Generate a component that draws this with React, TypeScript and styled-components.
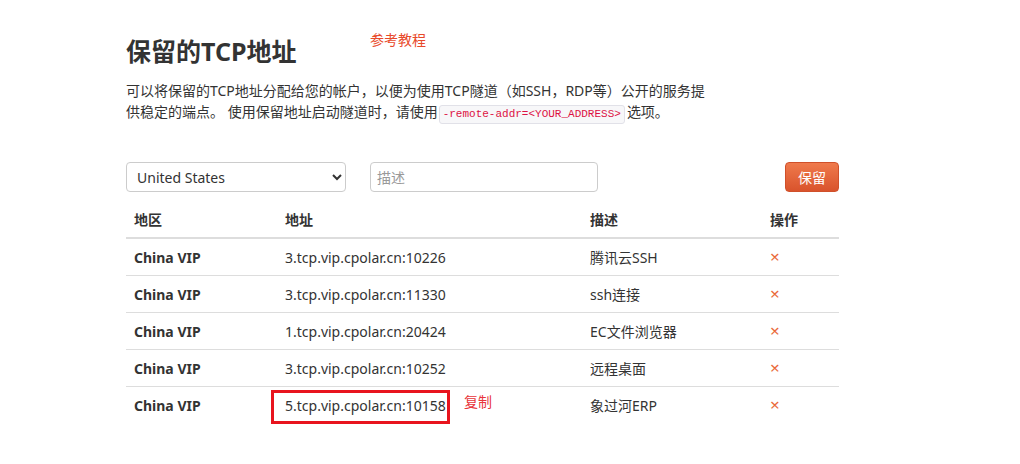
import styled, { createGlobalStyle } from "styled-components";

type Tunnel = {
    region: string
    address: string
    note: string
    marked?: boolean
}

const tunnels: Tunnel[] = [
    { region: "China VIP", address: "3.tcp.vip.cpolar.cn:10226", note: "腾讯云SSH" },
    { region: "China VIP", address: "3.tcp.vip.cpolar.cn:11330", note: "ssh连接" },
    { region: "China VIP", address: "1.tcp.vip.cpolar.cn:20424", note: "EC文件浏览器" },
    { region: "China VIP", address: "3.tcp.vip.cpolar.cn:10252", note: "远程桌面" },
    { region: "China VIP", address: "5.tcp.vip.cpolar.cn:10158", note: "象过河ERP", marked: true }
]

const GlobalStyle = createGlobalStyle`
    body {
        margin: 0;
        background: #fff;
        color: #333;
        font-family: "Noto Sans", "Noto Sans CJK SC", sans-serif;
        font-size: 14px;
    }
`

const Page = styled.div`
    padding: 26px 0 0 126px;
    width: 713px;
`

const TitleRow = styled.div`
    display: flex;
    align-items: flex-start;
`

const Title = styled.h2`
    margin: 9px 0 0;
    font-size: 25px;
    font-weight: 700;
    line-height: 32px;
    color: #333;
    width: 244px;
`

const HelpLink = styled.a`
    color: #e8492a;
    font-size: 14px;
    line-height: 20px;
    text-decoration: none;
    margin-top: 4px;
`

const Intro = styled.p`
    margin: 13px 0 0;
    width: 584px;
    line-height: 21px;
    font-size: 14px;
`

const Code = styled.code`
    display: inline-block;
    font-family: "Liberation Mono", monospace;
    font-size: 11px;
    line-height: 15px;
    color: #dd1144;
    background: #f7f7f9;
    border: 1px solid #e1e1e8;
    border-radius: 3px;
    padding: 1px 3px;
    margin: 0 2px 0 1px;
`

const Toolbar = styled.div`
    display: flex;
    align-items: center;
    margin-top: 38px;
`

const Select = styled.select`
    width: 220px;
    height: 30px;
    border: 1px solid #ccc;
    border-radius: 4px;
    background: #fff;
    color: #333;
    font: inherit;
    font-size: 14px;
    padding: 0 6px;
`

const Input = styled.input`
    margin-left: 24px;
    width: 228px;
    height: 30px;
    box-sizing: border-box;
    border: 1px solid #ccc;
    border-radius: 4px;
    font: inherit;
    font-size: 14px;
    padding: 0 6px;
    &::placeholder { color: #999; }
`

const SaveButton = styled.button`
    margin-left: auto;
    width: 54px;
    height: 30px;
    border: 1px solid #d0502a;
    border-radius: 4px;
    background: linear-gradient(#ef7a4c, #d9532c);
    color: #fff;
    font: inherit;
    font-size: 14px;
`

const Table = styled.table`
    width: 100%;
    border-collapse: collapse;
    margin-top: 9px;
`

const Th = styled.th<{ $w: number }>`
    width: ${p => p.$w}px;
    text-align: left;
    font-weight: 700;
    padding: 8px;
    height: 36px;
    box-sizing: border-box;
    border-bottom: 2px solid #ddd;
`

const Td = styled.td<{ $bold?: boolean }>`
    padding: 8px;
    height: 37px;
    box-sizing: border-box;
    border-top: 1px solid #ddd;
    font-weight: ${p => (p.$bold ? 700 : 400)};
    position: relative;
`

const Remove = styled.span`
    color: #ea6a3a;
    font-size: 17px;
    line-height: 14px;
`

const Marker = styled.span`
    position: absolute;
    left: -6px;
    top: 3px;
    width: 179px;
    height: 34px;
    box-sizing: border-box;
    border: 3px solid #e8141e;
`

const CopyNote = styled.span`
    position: absolute;
    left: 187px;
    top: 4px;
    color: #e8343a;
    font-size: 14px;
`

function App() {
    return (
        <>
            <GlobalStyle />
            <Page>
                <TitleRow>
                    <Title>保留的TCP地址</Title>
                    <HelpLink href="#">参考教程</HelpLink>
                </TitleRow>
                <Intro>
                    可以将保留的TCP地址分配给您的帐户，以便为使用TCP隧道（如SSH，RDP等）公开的服务提供稳定的端点。 使用保留地址启动隧道时，请使用<Code>-remote-addr=&lt;YOUR_ADDRESS&gt;</Code>选项。
                </Intro>
                <Toolbar>
                    <Select defaultValue="us">
                        <option value="us">United States</option>
                        <option value="cn">China VIP</option>
                    </Select>
                    <Input placeholder="描述" />
                    <SaveButton>保留</SaveButton>
                </Toolbar>
                <Table>
                    <thead>
                        <tr>
                            <Th $w={151}>地区</Th>
                            <Th $w={305}>地址</Th>
                            <Th $w={180}>描述</Th>
                            <Th $w={77}>操作</Th>
                        </tr>
                    </thead>
                    <tbody>
                        {tunnels.map(t => (
                            <tr key={t.address}>
                                <Td $bold>{t.region}</Td>
                                <Td>
                                    {t.address}
                                    {t.marked && (
                                        <>
                                            <Marker />
                                            <CopyNote>复制</CopyNote>
                                        </>
                                    )}
                                </Td>
                                <Td>{t.note}</Td>
                                <Td><Remove>×</Remove></Td>
                            </tr>
                        ))}
                    </tbody>
                </Table>
            </Page>
        </>
    )
}

export default App;
